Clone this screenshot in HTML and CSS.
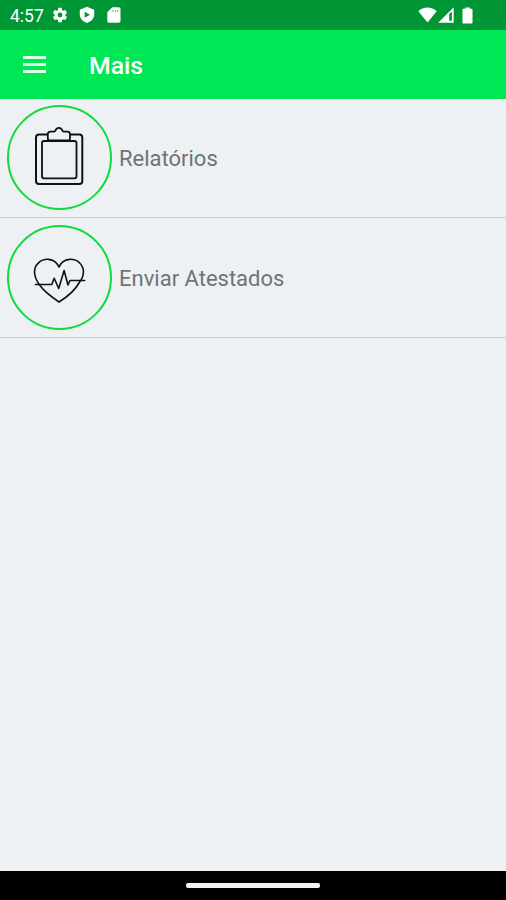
FILE: index.html
```
<!DOCTYPE html>
<html lang="pt-BR">
<head>
    <meta charset="UTF-8">
    <title>Mais</title>
    <link rel="stylesheet" href="styles.css">
</head>
<body>
    <div class="status-bar">
        <span class="clock">4:57</span>
        <svg class="icon-gear" width="18" height="18" viewBox="0 0 24 24" fill="#fff">
            <path d="M19.1 12.900c0-.3.1-.6.1-.9s0-.6-.1-.9l2-1.600c.2-.1.2-.4.1-.6l-1.900-3.300c-.1-.2-.4-.3-.6-.2l-2.400 1c-.5-.4-1-.7-1.600-.9l-.4-2.600c0-.2-.2-.4-.5-.4h-3.800c-.2 0-.4.2-.5.4l-.3 2.600c-.6.2-1.100.5-1.600.9l-2.400-1c-.2-.1-.5 0-.6.2L2.700 8.900c-.1.2-.1.5.1.6l2 1.600c0 .3-.1.6-.1.9s0 .6.1.9l-2 1.600c-.2.1-.2.4-.1.6l1.900 3.300c.1.2.4.3.6.2l2.400-1c.5.4 1 .7 1.600.9l.4 2.600c0 .2.2.4.5.4h3.800c.2 0 .4-.2.5-.4l.3-2.600c.6-.2 1.100-.5 1.600-.9l2.400 1c.2.1.5 0 .6-.2l1.900-3.300c.1-.2.1-.5-.1-.6zM12 15.200a3.200 3.200 0 1 1 0-6.400 3.200 3.200 0 0 1 0 6.400z"/>
        </svg>
        <svg class="icon-shield" width="16" height="18" viewBox="0 0 16 18">
            <path d="M8 .8l7.200 2.900v4.900c0 3.800-2.800 7-7.200 8.400-4.400-1.400-7.200-4.600-7.200-8.400V3.700z" fill="#fff"/>
            <path d="M5.700 5.700l5.300 3-5.300 3z" fill="#009636"/>
        </svg>
        <svg class="icon-sd" width="14" height="16" viewBox="0 0 14 16">
            <path d="M5.200.3h6.600c1 0 1.700.7 1.700 1.700v12c0 1-.7 1.700-1.700 1.700H2c-1 0-1.700-.7-1.700-1.700V5.200z" fill="#fff"/>
            <path d="M5.900 3v2M8.300 3v2M10.700 3v2" stroke="#009636" stroke-width="1" opacity=".65"/>
        </svg>
        <div class="status-right">
            <svg width="19" height="16" viewBox="0 0 19 16" fill="#fff">
                <path d="M9.500 15.500L.3 4.200C3 1.900 6 .6 9.500.6s6.500 1.300 9.200 3.600z"/>
            </svg>
            <svg class="icon-signal" width="16" height="16" viewBox="0 0 16 16">
                <path d="M15.700.2v15.500H.2z" fill="#fff"/>
                <path d="M11.200 7.100l2.700-2.700v9.300h-2.700z" fill="#009636"/>
            </svg>
            <svg class="icon-battery" width="11" height="17" viewBox="0 0 11 17" fill="#fff">
                <path d="M3.200.4h4.600v1.400h1.700c.6 0 1 .4 1 1v12.700c0 .6-.4 1-1 1h-8c-.6 0-1-.4-1-1V2.800c0-.6.4-1 1-1h1.700z"/>
            </svg>
        </div>
    </div>

    <div class="toolbar">
        <div class="menu-icon">
            <span></span>
            <span></span>
            <span></span>
        </div>
        <h1 class="title">Mais</h1>
    </div>

    <div class="list">
        <div class="list-item">
            <div class="circle">
                <svg width="101" height="101" viewBox="0 0 101 101" fill="none" stroke="#111" stroke-linejoin="round">
                    <path d="M38.500 27.500H30a3 3 0 0 0-3 3V74a3 3 0 0 0 3 3h40.300a3 3 0 0 0 3-3V30.500a3 3 0 0 0-3-3h-9" stroke-width="2"/>
                    <rect x="33" y="34" width="34.500" height="37.300" rx="2" stroke-width="1.800"/>
                    <path d="M40.500 33.300a1.700 1.700 0 0 1-1.700-1.700v-4.300a2.600 2.600 0 0 1 2.600-2.600h3.200c1 0 1.500-.4 1.900-1.300.7-1.700 1.700-2.500 3.400-2.500s2.700.8 3.400 2.500c.4.900.9 1.300 1.900 1.300h3.200a2.600 2.600 0 0 1 2.600 2.600v4.300a1.700 1.700 0 0 1-1.700 1.700z" stroke-width="1.800"/>
                </svg>
            </div>
            <span class="label">Relatórios</span>
        </div>
        <div class="list-item">
            <div class="circle">
                <svg width="101" height="101" viewBox="0 0 101 101" fill="none" stroke="#111" stroke-width="1.600" stroke-linejoin="round" stroke-linecap="round">
                    <path d="M50 75C41.500 69.200 35 64.200 31 58.500C24.500 50 23.500 41.300 29.500 35.800c5.500-5 14.500-4.600 18.700 1.200l1.800 3 1.800-3c4.200-5.800 13.200-6.200 18.700-1.200C76 41.300 75.500 49 70.300 55.500C66 63.500 58.800 69.500 50 75z"/>
                    <path d="M26.500 57.500h16.300l2.400-6.200 4.500 10.200 5.400-18 3.900 14.500 2-4.500h14.700"/>
                </svg>
            </div>
            <span class="label">Enviar Atestados</span>
        </div>
    </div>

    <div class="nav-bar">
        <div class="nav-handle"></div>
    </div>
</body>
</html>
```

FILE: styles.css
```
* {
    box-sizing: border-box;
}

body {
    margin: 0;
    height: 900px;
    display: flex;
    flex-direction: column;
    background-color: #edf1f4;
    font-family: Roboto, sans-serif;
    overflow: hidden;
}

svg {
    display: block;
}

.status-bar {
    height: 30px;
    display: flex;
    align-items: center;
    padding: 0 33px 0 10px;
    background-color: #009636;
    color: #fff;
}

.clock {
    width: 41px;
    font-size: 17.5px;
    line-height: 30px;
    padding-top: 2px;
}

.icon-shield {
    margin-left: 10px;
}

.icon-sd {
    margin-left: 12px;
}

.status-right {
    display: flex;
    align-items: center;
    margin-left: auto;
}

.icon-signal {
    margin-left: 1px;
}

.icon-battery {
    margin-left: 8px;
}

.toolbar {
    height: 69px;
    display: flex;
    align-items: center;
    padding: 0 0 1px 23px;
    background-color: #00e756;
}

.menu-icon {
    width: 23px;
    display: flex;
    flex-direction: column;
    gap: 4px;
}

.menu-icon span {
    height: 3px;
    background-color: #dfffe4;
}

.title {
    margin: 3px 0 0 43px;
    color: #fff;
    font-size: 24.8px;
    font-weight: 500;
}

.list {
    flex: 1;
}

.list-item {
    height: 120px;
    display: flex;
    align-items: center;
    padding-left: 7px;
    border-bottom: 1px solid #cbd0d3;
}

.list-item:first-child {
    height: 119px;
    padding-bottom: 1px;
}

.circle {
    width: 105px;
    height: 105px;
    border: 2px solid #0fdc3c;
    border-radius: 50%;
}

.label {
    margin: 2px 0 0 7px;
    color: #717375;
    font-size: 22px;
}

.nav-bar {
    height: 29px;
    display: flex;
    align-items: center;
    justify-content: center;
    background-color: #000;
}

.nav-handle {
    width: 134px;
    height: 5px;
    border-radius: 2px;
    background-color: #f2f2f2;
}
```
